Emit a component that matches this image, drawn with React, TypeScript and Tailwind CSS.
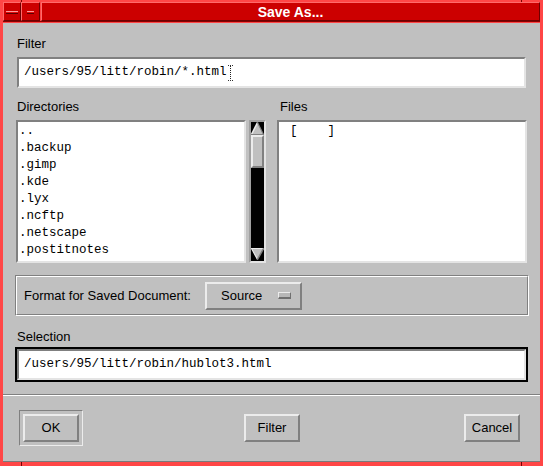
function Raised({ className, children }: { className?: string; children?: React.ReactNode }) {
  return (
    <div
      className={
        "border-2 border-t-[#ececec] border-l-[#ececec] border-b-[#808080] border-r-[#808080] bg-[#c0c0c0] " +
        (className ?? "")
      }
    >
      {children}
    </div>
  );
}

function Cursor() {
  return (
    <svg width="5" height="16" viewBox="0 0 5 16" className="ml-[1px]">
      <line x1="0" y1="0.5" x2="5" y2="0.5" stroke="#333" strokeDasharray="1 1" />
      <line x1="2.5" y1="1" x2="2.5" y2="15" stroke="#222" strokeDasharray="1 1" />
      <line x1="0" y1="15.5" x2="5" y2="15.5" stroke="#333" strokeDasharray="1 1" />
    </svg>
  );
}

export default function App() {
  const dirs = ["..", ".backup", ".gimp", ".kde", ".lyx", ".ncftp", ".netscape", ".postitnotes"];
  return (
    <div className="relative w-[543px] h-[466px] bg-[#ff4646] pt-[2px] pl-[3px] pr-[3px] pb-[4px] flex flex-col font-['Liberation_Sans',Arial,sans-serif] text-black overflow-hidden">
      {/* frame notches */}
      <div className="absolute left-[21px] top-0 w-[1px] h-[2px] bg-[#7a0000]" />
      <div className="absolute left-[521px] top-0 w-[1px] h-[2px] bg-[#7a0000]" />
      <div className="absolute left-[21px] bottom-0 w-[1px] h-[4px] bg-[#7a0000]" />
      <div className="absolute left-[521px] bottom-0 w-[1px] h-[4px] bg-[#7a0000]" />

      {/* title bar */}
      <div className="flex h-[19px]">
        <div className="w-[18px] h-full bg-[#cc0000] border border-t-[#ff6a6a] border-l-[#ff6a6a] border-b-[#6e0000] border-r-[#6e0000] flex items-center justify-center pt-[1px]">
          <div className="w-[12px] h-[3px] bg-[#e01010] border-t border-t-[#ff9a9a] border-b border-b-[#5a0000]" />
        </div>
        <div className="w-[19px] h-full bg-[#cc0000] border border-t-[#ff6a6a] border-l-[#ff6a6a] border-b-[#6e0000] border-r-[#6e0000] flex items-center justify-center pt-[1px]">
          <div className="w-[7px] h-[3px] bg-[#e01010] border-t border-t-[#ff9a9a] border-b border-b-[#5a0000]" />
        </div>
        <div className="flex-1 ml-[1px] h-full bg-[#cc0000] border border-t-[#ff6a6a] border-l-[#ff6a6a] border-b-[#6e0000] border-r-[#6e0000] flex items-center justify-center text-white font-bold text-[14px] leading-none">
          Save As...
        </div>
      </div>
      <div className="h-[1px] bg-[#8a0000]" />
      <div className="h-[1px] bg-[#ff4646]" />

      {/* content */}
      <div className="flex-1 bg-[#c0c0c0] border-b border-b-[#7a7a7a] flex flex-col text-[13px]">
        <div className="mt-[14px] ml-[14px] h-[14px] leading-[14px]">Filter</div>
        <div className="mt-[4px] ml-[12px] w-[513px] h-[35px] p-[2px]">
          <div className="h-full border-2 border-t-[#808080] border-l-[#808080] border-b-[#e4e4e4] border-r-[#e4e4e4] bg-white flex items-center pl-[5px] font-['Liberation_Mono',monospace] text-[12.5px] whitespace-pre">
            <span>/users/95/litt/robin/*.html</span>
            <Cursor />
          </div>
        </div>

        <div className="mt-[10px] h-[14px] leading-[14px] flex">
          <div className="w-[277px] pl-[14px]">Directories</div>
          <div>Files</div>
        </div>

        <div className="mt-[6px] h-[143px] flex">
          <div className="ml-[13px] w-[230px] h-full border-2 border-t-[#808080] border-l-[#808080] border-b-[#e4e4e4] border-r-[#e4e4e4] bg-white pt-[1px] pl-[1px] font-['Liberation_Mono',monospace] text-[12.5px] leading-[17px] whitespace-pre">
            {dirs.map((d) => (
              <div key={d}>{d}</div>
            ))}
          </div>
          {/* scrollbar */}
          <div className="ml-[3px] w-[17px] h-full border-2 border-t-[#a0a0a0] border-l-[#a0a0a0] border-b-[#e4e4e4] border-r-[#e4e4e4] bg-black flex flex-col">
            <svg width="13" height="13" viewBox="0 0 13 13" className="shrink-0">
              <polygon points="6.5,0.5 12.5,12.5 0.5,12.5" fill="#c0c0c0" />
              <polyline points="0.5,12.5 6.5,0.5" stroke="#ececec" fill="none" strokeWidth="1.5" />
              <polyline points="6.5,0.5 12.5,12.5 0.5,12.5" stroke="#808080" fill="none" strokeWidth="1.2" />
            </svg>
            <div className="h-[33px] shrink-0 border-2 border-t-[#ececec] border-l-[#ececec] border-b-[#808080] border-r-[#808080] bg-[#c0c0c0]" />
            <div className="flex-1" />
            <svg width="13" height="12" viewBox="0 0 13 12" className="shrink-0 mb-[1px]">
              <polygon points="0.5,0.5 12.5,0.5 6.5,11.5" fill="#c0c0c0" />
              <polyline points="6.5,11.5 0.5,0.5 12.5,0.5" stroke="#ececec" fill="none" strokeWidth="1.2" />
              <polyline points="12.5,0.5 6.5,11.5" stroke="#808080" fill="none" strokeWidth="1.5" />
            </svg>
          </div>
          <div className="ml-[11px] w-[250px] h-full border-2 border-t-[#808080] border-l-[#808080] border-b-[#e4e4e4] border-r-[#e4e4e4] bg-white pt-[1px] pl-[11px] font-['Liberation_Mono',monospace] text-[12.5px] leading-[17px] whitespace-pre">
            {"[    ]"}
          </div>
        </div>

        {/* format frame */}
        <div className="mt-[12px] ml-[12px] w-[514px] h-[41px] border border-t-[#808080] border-l-[#808080] border-b-white border-r-white">
          <div className="h-full border border-t-white border-l-white border-b-[#808080] border-r-[#808080] flex items-center">
            <div className="w-[188px] pl-[7px]">Format for Saved Document:</div>
            <Raised className="w-[97px] h-[28px] flex items-center pl-[14px]">
              <span>Source</span>
              <div className="ml-[16px] w-[13px] h-[7px] border border-t-[#ececec] border-l-[#ececec] border-b-2 border-b-[#707070] border-r-[#707070] bg-[#b8b8b8]" />
            </Raised>
          </div>
        </div>

        <div className="mt-[14px] ml-[14px] h-[14px] leading-[14px]">Selection</div>
        <div className="mt-[3px] ml-[12px] w-[513px] h-[35px] border-2 border-black">
          <div className="h-full border-2 border-t-[#808080] border-l-[#808080] border-b-[#e4e4e4] border-r-[#e4e4e4] bg-white flex items-center pl-[5px] font-['Liberation_Mono',monospace] text-[12.5px] whitespace-pre">
            /users/95/litt/robin/hublot3.html
          </div>
        </div>

        <div className="mt-[12px] h-[2px] border-t border-t-[#808080] border-b border-b-white" />

        <div className="mt-[14px] h-[36px] flex items-center">
          <div className="ml-[16px] w-[64px] h-[36px] border border-t-[#808080] border-l-[#808080] border-b-[#ececec] border-r-[#ececec] p-[3px]">
            <Raised className="w-full h-full flex items-center justify-center">OK</Raised>
          </div>
          <Raised className="ml-[161px] w-[56px] h-[28px] flex items-center justify-center">Filter</Raised>
          <Raised className="ml-[164px] w-[56px] h-[28px] flex items-center justify-center">Cancel</Raised>
        </div>
      </div>
    </div>
  );
}
